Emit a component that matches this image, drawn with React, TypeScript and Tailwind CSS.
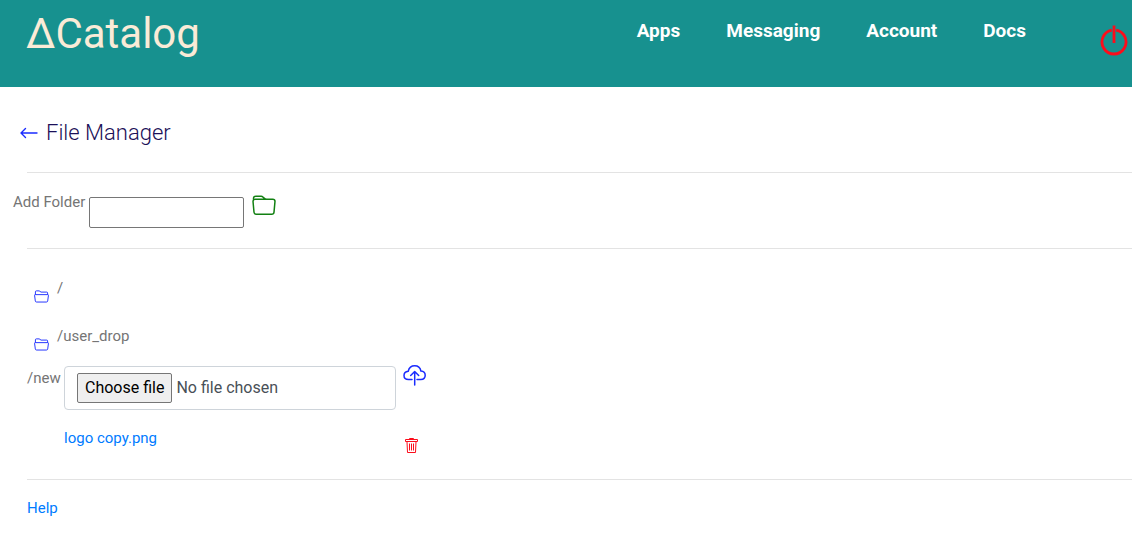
import React, { useState } from "react";
import { BsFolder } from "react-icons/bs";

const navItems = ["Apps", "Messaging", "Account", "Docs"];
const folders = ["/", "/user_drop"];

function PowerIcon() {
  return (
    <svg viewBox="0 0 28 32" className="h-8 w-7" fill="none" stroke="#fc0d1b" strokeWidth="2.8">
      <path d="M11.8 6.2A12 12 0 1 0 16.2 6.2" />
      <path d="M14 1.500V19" />
    </svg>
  );
}

function ArrowLeftIcon() {
  return (
    <svg viewBox="0 0 18 12" className="h-3 w-[18px]" fill="none" stroke="#1a2bff" strokeWidth="1.4" strokeLinecap="round" strokeLinejoin="round">
      <path d="M5.5 1.5 1 6l4.500 4.500M1.200 6H17" />
    </svg>
  );
}

function FolderOpenIcon() {
  return (
    <svg viewBox="0 0 16 13" className="h-[13px] w-[15px]" fill="none" stroke="#1a2bff" strokeWidth="1" strokeLinejoin="round">
      <path d="M1.500 4.500V1.500Q1.500.500 2.500.500H5.500L7.500 1.800H13.500Q14.500 1.800 14.500 2.800V4.500" />
      <path d="M1.300 4.500H14.700Q15.500 4.500 15.400 5.300L14.600 11.200Q14.400 12.400 13.300 12.400H2.700Q1.600 12.400 1.400 11.200L.600 5.300Q.500 4.500 1.300 4.500Z" />
    </svg>
  );
}

function CloudUploadIcon() {
  return (
    <svg viewBox="0 0 24 24" className="h-6 w-6" fill="none" stroke="#1a2bff" strokeWidth="1.500" strokeLinecap="round" strokeLinejoin="round">
      <path d="M9 17.500H5.500C3 17.500 1 16 1 13.500C1 11 2.800 9.500 5.200 9.200C6 6 8.500 3.800 11.700 3.800C15 3.800 17.300 6 17.900 9C20.600 9.200 22.200 11 22.200 13.300C22.200 15.800 20.300 17.500 17.800 17.500H14" />
      <path d="M11.700 23V9.500M7.700 13.500L11.700 9.500L15.700 13.500" />
    </svg>
  );
}

function TrashIcon() {
  return (
    <svg viewBox="0 0 13 15" className="h-[15px] w-[13px]" fill="none" stroke="#fc0d1b" strokeWidth="1">
      <path d="M4.500 1.500V.500H8.500V1.500M.500 1.500H12.500V3.500H.500Z" />
      <path d="M2 3.500 2.500 14.500H10.500L11 3.500M4.500 5.500V12.500M6.500 5.500V12.500M8.500 5.500V12.500" />
    </svg>
  );
}

export default function App() {
  const [fileName, setFileName] = useState("No file chosen");
  return (
    <div className="font-['Roboto',sans-serif] text-[15px] leading-6 text-[#757575]">
      <header className="flex h-[87px] items-start bg-[#17918f] pl-[26px]">
        <a href="#" className="pt-1 text-[42px] leading-[60px] text-[#faebd7]">∆Catalog</a>
        <nav className="ml-auto mr-[74px] flex gap-[46px] pt-4 text-[19px] leading-[30px] font-bold text-white">
          {navItems.map((item) => (
            <a key={item} href="#">{item}</a>
          ))}
        </nav>
        <button type="button" aria-label="Log out" className="mr-1 mt-6">
          <PowerIcon />
        </button>
      </header>
      <main>
        <div className="flex h-[85px] items-center gap-2 pl-5 pt-1.5">
          <a href="#" aria-label="Back"><ArrowLeftIcon /></a>
          <h1 className="text-[22px] leading-8 font-light text-[#1b1058]">File Manager</h1>
        </div>
        <hr className="ml-[27px] border-[#e3e3e3]" />
        <form className="flex h-[75px] items-start pl-[13px] pt-[17px]">
          <label htmlFor="folder">Add Folder</label>
          <input id="folder" type="text" className="ml-1 mt-[7px] h-[31px] w-[155px] rounded-xs border border-[#767676] px-2" />
          <button type="button" aria-label="Add folder" className="ml-2 mt-1 text-[#128012]">
            <BsFolder size={24} />
          </button>
        </form>
        <hr className="ml-[27px] border-[#e3e3e3]" />
        <ul className="pl-[34px] pt-[27px]">
          {folders.map((name) => (
            <li key={name} className="flex h-12 items-start gap-2 last:h-[42px]">
              <a href="#" aria-label={"Open " + name} className="pt-3.5"><FolderOpenIcon /></a>
              <span>{name}</span>
            </li>
          ))}
        </ul>
        <section className="grid grid-cols-[37px_332px_auto] justify-start pl-[27px]">
          <span>/new</span>
          <label className="flex h-11 items-center gap-1 rounded-sm border border-[#ced4da] px-3 text-base text-[#495057]">
            <input type="file" className="sr-only" onChange={(e) => setFileName(e.target.files?.[0]?.name ?? "No file chosen")} />
            <span className="rounded-xs border border-[#767676] bg-[#efefef] px-[7px] py-0.5 text-black">Choose file</span>
            <span>{fileName}</span>
          </label>
          <button type="button" aria-label="Upload" className="-mt-1 ml-[7px] h-6 w-6">
            <CloudUploadIcon />
          </button>
          <a href="#" className="col-start-2 mt-4 h-[53px] text-[#007bff]">logo copy.png</a>
          <button type="button" aria-label="Delete logo copy.png" className="ml-[9px] mt-7 h-[15px] w-[13px]">
            <TrashIcon />
          </button>
        </section>
        <hr className="ml-[27px] border-[#e3e3e3]" />
        <footer className="pl-[27px] pt-4">
          <a href="#" className="text-[#007bff]">Help</a>
        </footer>
      </main>
    </div>
  );
}
